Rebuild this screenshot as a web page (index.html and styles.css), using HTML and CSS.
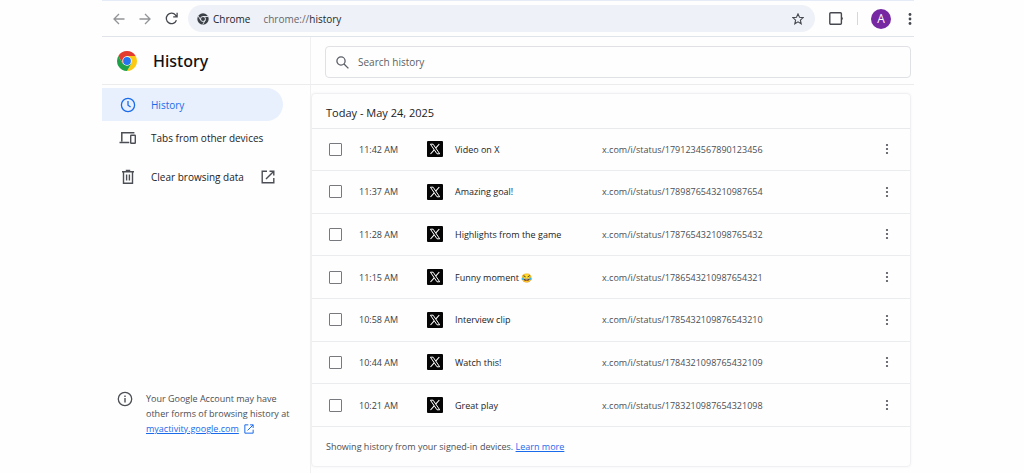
FILE: index.html
```html
<!DOCTYPE html>
<html lang="en">
<head>
<meta charset="UTF-8">
<meta name="viewport" content="width=device-width, initial-scale=1.0">
<title>History</title>
<link rel="stylesheet" href="styles.css">
</head>
<body>
<svg class="sprite" aria-hidden="true">
  <symbol id="x-logo" viewBox="0 0 16 16">
    <rect width="16" height="16" rx="1" fill="#050505"/>
    <path d="M3.4 3.2h2.7l6.6 9.6H10z" fill="none" stroke="#fff" stroke-width="1"/>
    <path d="M12.3 3 8.7 7.1M7.2 8.9 3.5 13" stroke="#fff" stroke-width="1.1"/>
  </symbol>
  <symbol id="dots" viewBox="0 0 4 12">
    <circle cx="2" cy="2" r="1.1"/><circle cx="2" cy="6" r="1.1"/><circle cx="2" cy="10" r="1.1"/>
  </symbol>
  <symbol id="open" viewBox="0 0 14 14">
    <path d="M6 1.2H1.2v11.6h11.6V8M8.5 1.2h4.3v4.3M12.8 1.2 5 9" fill="none" stroke="currentColor" stroke-width="1.4"/>
  </symbol>
</svg>

<div class="window">
  <div class="toolbar">
    <button class="icon-btn muted" aria-label="Back">
      <svg width="12" height="12" viewBox="0 0 12 12"><path d="M11.5 6H1M6 1 1 6l5 5"/></svg>
    </button>
    <button class="icon-btn muted" aria-label="Forward">
      <svg width="12" height="12" viewBox="0 0 12 12"><path d="M.5 6H11M6 1l5 5-5 5"/></svg>
    </button>
    <button class="icon-btn reload" aria-label="Reload">
      <svg width="13" height="13" viewBox="0 0 13 13"><path d="M11.4 8.2A5.2 5.2 0 1 1 10.6 3.2L12 4.6M12.1.8v4H8.2" stroke-width="1.3"/></svg>
    </button>
    <div class="address">
      <svg width="12" height="12" viewBox="0 0 12 12">
        <circle cx="6" cy="6" r="5.7" fill="#3c4047"/>
        <circle cx="6" cy="6" r="2.5" fill="#3c4047" stroke="#eef1f8" stroke-width=".9"/>
        <path d="M6 3.5h5M3.8 7.2 1.3 3.1M8.2 7.2 5.7 11.5" stroke="#eef1f8" stroke-width=".9"/>
      </svg>
      <span class="site">Chrome</span>
      <span class="url">chrome://<b>history</b></span>
      <button class="icon-btn star" aria-label="Bookmark this tab">
        <svg width="12" height="12" viewBox="0 0 12 12"><path d="m6 .9 1.5 3.4 3.7.3-2.8 2.5.8 3.7L6 8.9l-3.2 1.9.8-3.7L.8 4.6l3.7-.3z" stroke-width="1.1"/></svg>
      </button>
    </div>
    <button class="icon-btn panel" aria-label="Side panel">
      <svg width="14" height="13" viewBox="0 0 14 13"><rect x=".8" y=".8" width="11.6" height="11.4" rx="1" stroke-width="1.4"/><path d="M13.3 5.5v2" stroke-width="1"/></svg>
    </button>
    <span class="separator"></span>
    <button class="avatar" aria-label="Profile">A</button>
    <button class="icon-btn menu" aria-label="Menu">
      <svg width="4" height="12" viewBox="0 0 4 12" class="solid"><circle cx="2" cy="1.5" r="1.4"/><circle cx="2" cy="6" r="1.4"/><circle cx="2" cy="10.5" r="1.4"/></svg>
    </button>
  </div>

  <header class="header">
    <div class="brand">
      <svg width="20" height="20" viewBox="0 0 20 20">
        <path d="M1.34 5A10 10 0 0 1 18.66 5H10L5.67 12.5z" fill="#e33b2e"/>
        <path d="M18.66 5A10 10 0 0 1 10 20l4.33-7.5L10 5z" fill="#fcc913"/>
        <path d="M10 20A10 10 0 0 1 1.34 5l4.33 7.5h8.66z" fill="#1fa14a"/>
        <circle cx="10" cy="10" r="4.7" fill="#fff"/>
        <circle cx="10" cy="10" r="3.9" fill="#2374ee"/>
      </svg>
      <h1>History</h1>
    </div>
    <div class="search-area">
      <label class="search">
        <svg width="13" height="13" viewBox="0 0 13 13"><circle cx="5" cy="5" r="4.1"/><path d="m8 8 4.4 4.4"/></svg>
        <input type="text" placeholder="Search history" aria-label="Search history">
      </label>
    </div>
  </header>

  <div class="content">
    <aside class="sidebar">
      <nav>
        <a class="nav-item active" href="#">
          <svg width="16" height="16" viewBox="0 0 16 16"><circle cx="8" cy="8" r="6.6"/><path d="M8 4v4.2l2.6 1.8"/></svg>
          History
        </a>
        <a class="nav-item" href="#">
          <svg width="18" height="14" viewBox="0 0 18 14"><path d="M2.8 10.5V1.7h12.6M.5 11.6h9.8" stroke-width="1.5"/><rect x="11.7" y="4.2" width="4.6" height="8" rx=".5" stroke-width="1.4"/></svg>
          Tabs from other devices
        </a>
        <a class="nav-item clear" href="#">
          <svg width="14" height="16" viewBox="0 0 14 16"><path d="M2.5 3v11.3h9V3M1 2.7h12M4.8 1.4h4.4M5.6 5.5v6M8.4 5.5v6" stroke-width="1.4"/></svg>
          Clear browsing data
          <svg class="external" width="14" height="14"><use href="#open"/></svg>
        </a>
      </nav>
      <div class="note">
        <svg width="16" height="16" viewBox="0 0 16 16"><circle cx="8" cy="8" r="6.7"/><path d="M8 7v4.4M8 4.5v1.4" stroke-width="1.4"/></svg>
        <p>Your Google Account may have other forms of browsing history at <a href="#">myactivity.google.com</a> <svg class="link-icon" width="10" height="10"><use href="#open"/></svg></p>
      </div>
    </aside>

    <main class="main">
      <section class="card">
        <h2>Today - May 24, 2025</h2>
        <table>
          <tbody>
            <tr>
              <td class="check"><input type="checkbox" aria-label="Video on X"></td>
              <td class="time">11:42 AM</td>
              <td class="icon"><svg width="16" height="16"><use href="#x-logo"/></svg></td>
              <td class="title">Video on X</td>
              <td class="link">x.com/i/status/1791234567890123456</td>
              <td class="more"><button aria-label="Actions"><svg width="4" height="12"><use href="#dots"/></svg></button></td>
            </tr>
            <tr>
              <td class="check"><input type="checkbox" aria-label="Amazing goal!"></td>
              <td class="time">11:37 AM</td>
              <td class="icon"><svg width="16" height="16"><use href="#x-logo"/></svg></td>
              <td class="title">Amazing goal!</td>
              <td class="link">x.com/i/status/1789876543210987654</td>
              <td class="more"><button aria-label="Actions"><svg width="4" height="12"><use href="#dots"/></svg></button></td>
            </tr>
            <tr>
              <td class="check"><input type="checkbox" aria-label="Highlights from the game"></td>
              <td class="time">11:28 AM</td>
              <td class="icon"><svg width="16" height="16"><use href="#x-logo"/></svg></td>
              <td class="title">Highlights from the game</td>
              <td class="link">x.com/i/status/1787654321098765432</td>
              <td class="more"><button aria-label="Actions"><svg width="4" height="12"><use href="#dots"/></svg></button></td>
            </tr>
            <tr>
              <td class="check"><input type="checkbox" aria-label="Funny moment"></td>
              <td class="time">11:15 AM</td>
              <td class="icon"><svg width="16" height="16"><use href="#x-logo"/></svg></td>
              <td class="title">Funny moment 😂</td>
              <td class="link">x.com/i/status/1786543210987654321</td>
              <td class="more"><button aria-label="Actions"><svg width="4" height="12"><use href="#dots"/></svg></button></td>
            </tr>
            <tr>
              <td class="check"><input type="checkbox" aria-label="Interview clip"></td>
              <td class="time">10:58 AM</td>
              <td class="icon"><svg width="16" height="16"><use href="#x-logo"/></svg></td>
              <td class="title">Interview clip</td>
              <td class="link">x.com/i/status/1785432109876543210</td>
              <td class="more"><button aria-label="Actions"><svg width="4" height="12"><use href="#dots"/></svg></button></td>
            </tr>
            <tr>
              <td class="check"><input type="checkbox" aria-label="Watch this!"></td>
              <td class="time">10:44 AM</td>
              <td class="icon"><svg width="16" height="16"><use href="#x-logo"/></svg></td>
              <td class="title">Watch this!</td>
              <td class="link">x.com/i/status/1784321098765432109</td>
              <td class="more"><button aria-label="Actions"><svg width="4" height="12"><use href="#dots"/></svg></button></td>
            </tr>
            <tr>
              <td class="check"><input type="checkbox" aria-label="Great play"></td>
              <td class="time">10:21 AM</td>
              <td class="icon"><svg width="16" height="16"><use href="#x-logo"/></svg></td>
              <td class="title">Great play</td>
              <td class="link">x.com/i/status/1783210987654321098</td>
              <td class="more"><button aria-label="Actions"><svg width="4" height="12"><use href="#dots"/></svg></button></td>
            </tr>
          </tbody>
        </table>
        <p class="card-footer">Showing history from your signed-in devices. <a href="#">Learn more</a></p>
      </section>
    </main>
  </div>
</div>
</body>
</html>
```
FILE: styles.css
```css
* {
  box-sizing: border-box;
}

body {
  margin: 0;
  padding: 0 110px 0 102px;
  background: #fefefe;
  color: #1b1c1f;
  font-family: "Open Sans", "Noto Sans", sans-serif;
  font-size: 9px;
}

.sprite {
  display: none;
}

svg {
  display: block;
  flex: none;
  fill: none;
  stroke: currentColor;
  stroke-width: 1.3;
}

symbol,
.brand svg,
.address > svg,
.solid {
  stroke: none;
}

button {
  padding: 0;
  border: 0;
  background: none;
  color: inherit;
  font: inherit;
}

a {
  color: #1a6bec;
}

h1,
h2,
p {
  margin: 0;
}

.window {
  display: flex;
  flex-direction: column;
  min-height: 100vh;
}

/* Toolbar */
.toolbar {
  display: flex;
  align-items: center;
  height: 37px;
  padding-left: 11px;
  border-top: 1px solid #e6ebf8;
  border-bottom: 1px solid #e1e3ea;
  color: #45484e;
}

.icon-btn {
  display: flex;
  margin-right: 14px;
}

.icon-btn.muted {
  color: #929497;
}

.icon-btn.reload {
  margin-right: 10px;
}

.address {
  display: flex;
  flex: 1;
  align-items: center;
  height: 27px;
  padding: 0 11px 0 9px;
  border-radius: 14px;
  background: #eef1f8;
  font-size: 10px;
}

.site {
  margin: 0 13px 0 4px;
  color: #202226;
  font-weight: 500;
}

.url {
  color: #64676d;
}

.url b {
  color: #25272b;
  font-weight: 500;
}

.icon-btn.star {
  margin: 0 0 0 auto;
}

.icon-btn.panel {
  margin: 0 14px;
}

.separator {
  width: 1px;
  height: 13px;
  background: #d5d7dc;
}

.avatar {
  width: 20px;
  height: 20px;
  margin: 0 17px 0 13px;
  border-radius: 50%;
  background: #7627a2;
  color: #fff;
  font-size: 12px;
  line-height: 20px;
}

.icon-btn.menu {
  margin-right: 2px;
}

.solid {
  fill: currentColor;
}

/* Header */
.header {
  display: flex;
  height: 48px;
  border-bottom: 1px solid #ebecee;
}

.brand {
  display: flex;
  align-items: center;
  width: 209px;
  padding-left: 15px;
  border-right: 1px solid #f0f0f2;
}

.brand h1 {
  margin-left: 16px;
  color: #111;
  font-family: "Noto Sans", sans-serif;
  font-size: 16px;
  font-weight: 500;
}

.search-area {
  flex: 1;
  padding: 9px 3px 0 14px;
}

.search {
  display: flex;
  align-items: center;
  height: 32px;
  padding-left: 10px;
  border: 1px solid #e0e1e4;
  border-radius: 4px;
  color: #5a5e65;
}

.search input {
  flex: 1;
  margin-left: 9px;
  padding: 0;
  border: 0;
  outline: 0;
  background: none;
  color: inherit;
  font: inherit;
  font-size: 10px;
}

.search input::placeholder {
  color: #5a5e65;
}

/* Sidebar */
.content {
  display: flex;
  flex: 1;
}

.sidebar {
  display: flex;
  flex-direction: column;
  width: 209px;
  padding: 3px 0 37px;
  border-right: 1px solid #f0f0f2;
}

.nav-item {
  display: grid;
  grid-template-columns: 18px auto 1fr;
  align-items: center;
  justify-items: center;
  height: 33px;
  margin-right: 27px;
  padding-left: 17px;
  border-radius: 0 17px 17px 0;
  column-gap: 14px;
  color: #1b1c1f;
  font-size: 10px;
  font-weight: 500;
  text-decoration: none;
}

.nav-item svg {
  color: #4b4e54;
}

.nav-item.active,
.nav-item.active svg {
  color: #1a6bec;
}

.nav-item.active {
  background: #e8f0fe;
}

.nav-item.clear {
  margin-top: 6px;
}

.nav-item .external {
  justify-self: start;
  margin-left: 3px;
}

.note {
  display: flex;
  gap: 13px;
  margin-top: auto;
  padding: 0 16px 0 15px;
  color: #4b4e54;
  line-height: 15px;
}

.link-icon {
  display: inline-block;
  margin-left: 3px;
  color: #1a6bec;
  vertical-align: -2px;
}

/* History card */
.main {
  flex: 1;
  padding: 8px 3px 6px 0;
}

.card {
  border: 1px solid #f0f0f2;
  border-radius: 4px;
  box-shadow: 0 0 3px #f2f2f4;
}

.card h2 {
  height: 35px;
  padding-left: 14px;
  border-bottom: 1px solid #e9eaec;
  font-size: 11px;
  font-weight: 400;
  line-height: 38px;
}

table {
  width: 100%;
  height: 298px;
  border-collapse: collapse;
  table-layout: fixed;
}

td {
  padding: 0;
  border-bottom: 1px solid #ebecee;
}

.check {
  width: 47px;
  padding-left: 17px;
}

.check input {
  display: block;
  width: 13px;
  height: 13px;
  margin: 0;
  border: 1px solid #77797e;
  border-radius: 1px;
  appearance: none;
}

.time {
  width: 68px;
  color: #3c3f45;
}

.icon {
  width: 28px;
}

.title {
  width: 147px;
  font-weight: 500;
}

.link {
  color: #4b4e54;
}

.more {
  width: 25px;
}

.more button {
  display: block;
}

.more svg {
  fill: #4b4e54;
}

.card-footer {
  padding-left: 14px;
  color: #4b4e54;
  line-height: 39px;
}
```
